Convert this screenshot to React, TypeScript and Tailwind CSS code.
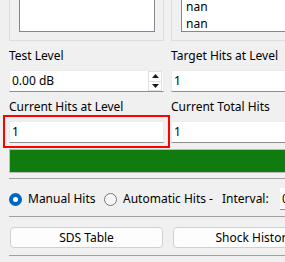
import React from 'react';

const Spinner: React.FC = () => (
  <div className="flex flex-col w-[14px] h-[20px] mr-[1px] border border-[#e0e0e0]">
    <div className="flex-1 flex items-center justify-center border-b border-[#e0e0e0]">
      <svg width="7" height="4" viewBox="0 0 7 4"><path d="M0 4 L3.5 0 L7 4 Z" fill="#1a1a1a" /></svg>
    </div>
    <div className="flex-1 flex items-center justify-center">
      <svg width="7" height="4" viewBox="0 0 7 4"><path d="M0 0 L3.5 4 L7 0 Z" fill="#1a1a1a" /></svg>
    </div>
  </div>
);

const Field: React.FC<{ value: string; children?: React.ReactNode }> = ({ value, children }) => (
  <div className="flex items-center w-[155px] h-[22px] bg-white border border-[#ececec] border-b-[#8e8e8e] pl-[2px]">
    <span className="flex-1">{value}</span>
    {children}
  </div>
);

const Radio: React.FC<{ checked?: boolean }> = ({ checked }) =>
  checked ? (
    <span className="flex items-center justify-center w-[13px] h-[13px] rounded-full bg-[#0067c0]">
      <span className="w-[5px] h-[5px] rounded-full bg-white" />
    </span>
  ) : (
    <span className="w-[13px] h-[13px] rounded-full border border-[#7a7a7a] bg-[#f5f5f5]" />
  );

const App: React.FC = () => {
  return (
    <div className="w-[285px] h-[262px] overflow-hidden bg-[#f0f0f0] text-black text-[12px] leading-[16px] font-['Noto_Sans',sans-serif]">
      <div className="w-[340px] pl-[9px]">
        {/* Group boxes */}
        <div className="flex gap-[7px] h-[41px]">
          <div className="w-[155px] h-full border-x border-b border-[#dcdcdc]">
            <div className="ml-[9px] mr-[8px] h-[32px] bg-white border-x border-b border-[#868690]" />
          </div>
          <div className="w-[155px] h-full border-x border-b border-[#dcdcdc]">
            <div className="ml-[9px] h-[32px] bg-white border-l border-b border-[#868690] overflow-hidden pl-[4px]">
              <div className="-mt-[2px] leading-[17px]">
                <div>nan</div>
                <div>nan</div>
              </div>
            </div>
          </div>
        </div>

        {/* Test level / target hits */}
        <div className="flex gap-[7px] mt-[7px] h-[16px]">
          <div className="w-[155px]">Test Level</div>
          <div className="w-[155px] whitespace-nowrap">Target Hits at Level</div>
        </div>
        <div className="flex gap-[7px] mt-[6px]">
          <Field value="0.00 dB">
            <Spinner />
          </Field>
          <Field value="1" />
        </div>

        {/* Current hits */}
        <div className="flex gap-[7px] mt-[7px] h-[16px]">
          <div className="w-[155px]">Current Hits at Level</div>
          <div className="w-[155px]">Current Total Hits</div>
        </div>
        <div className="flex gap-[7px] mt-[6px]">
          <div className="relative">
            <Field value="1" />
            <div className="absolute -left-[6px] -right-[6px] -top-[6px] -bottom-[5px] border-2 border-[#ff0000]" />
          </div>
          <Field value="1" />
        </div>

        {/* Progress */}
        <div className="mt-[6px] h-[24px] bg-[#107c10] border border-[#bcbcbc]" />
        <div className="mt-[5px] h-px bg-[#a0a0a0]" />

        {/* Hit mode */}
        <div className="flex items-center mt-[9px] h-[22px] whitespace-nowrap">
          <div className="flex items-center gap-[6px] w-[95px]">
            <Radio checked />
            <span>Manual Hits</span>
          </div>
          <div className="flex items-center gap-[6px] w-[118px]">
            <Radio />
            <span>Automatic Hits -</span>
          </div>
          <span className="w-[58px]">Interval:</span>
          <div className="h-[22px] w-[60px] bg-white border-b border-[#8e8e8e] pl-[2px] flex items-center">0</div>
        </div>
        <div className="mt-[6px] h-px bg-[#a0a0a0]" />

        {/* Buttons */}
        <div className="flex gap-[10px] mt-[10px] pl-px">
          <button className="w-[153px] h-[21px] rounded-[4px] bg-[#fdfdfd] border border-[#d0d0d0] text-center">SDS Table</button>
          <button className="w-[162px] h-[21px] rounded-[4px] bg-[#fdfdfd] border border-[#d0d0d0] text-center whitespace-nowrap">Shock History</button>
        </div>
        <div className="mt-[7px] h-px bg-[#a0a0a0]" />
      </div>
    </div>
  );
};

export default App;
